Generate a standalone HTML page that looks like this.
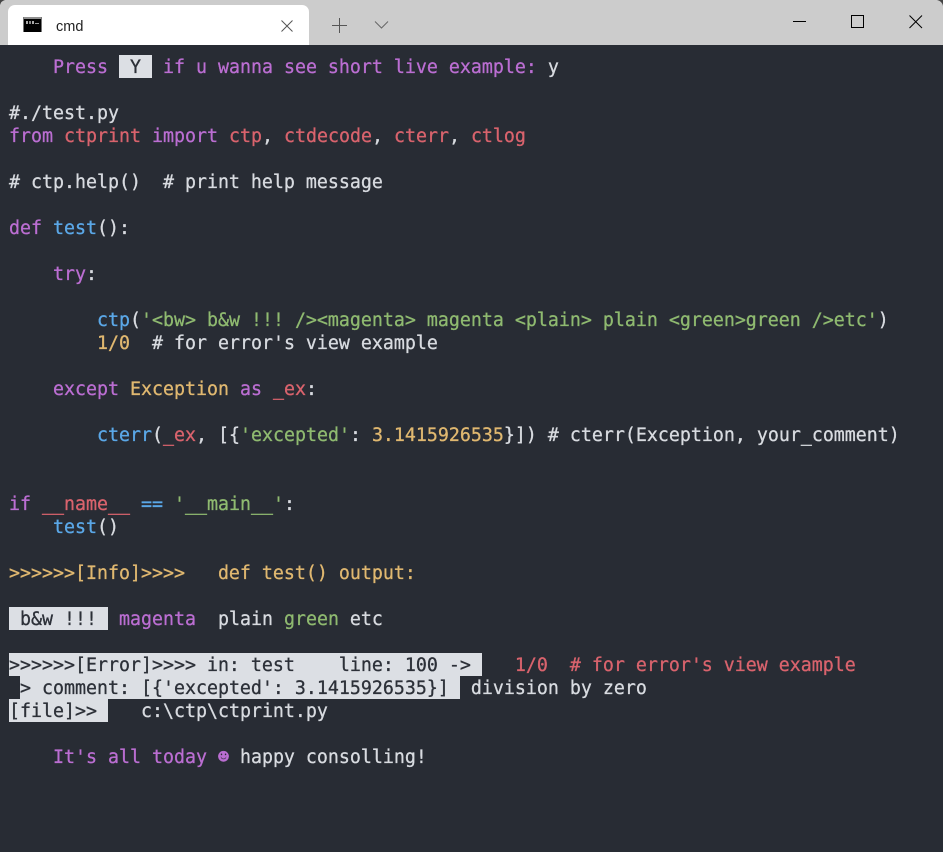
<!DOCTYPE html>
<html>
<head>
<meta charset="utf-8">
<style>
html,body{margin:0;padding:0;width:943px;height:852px;overflow:hidden;background:#282c34}
#bar{position:absolute;left:0;top:0;width:943px;height:45px;background:#cccccc}
#tab{position:absolute;left:8px;top:5px;width:301px;height:40px;background:#fff;border-radius:7px 7px 0 0}
#cmd{position:absolute;left:56px;top:18px;font:14.5px/18px "Liberation Sans",sans-serif;color:#222}
svg{position:absolute;left:0;top:0}
.l{position:absolute;left:9px;height:23px;margin:0;white-space:pre;font-family:"DejaVu Sans Mono",monospace;font-size:18.27px;line-height:23px;color:#d8dbe0;-webkit-text-stroke:.3px currentColor}
.m{color:#bb6ed2}.r{color:#d9636d}.g{color:#8fba70}.y{color:#e0b870}.b{color:#5ba8e8}
.k{color:#2c3038}
.hb{position:absolute;height:23px;background:#dcdfe4}
</style>
</head>
<body>
<div id="bar"></div>
<div id="tab"></div>
<div id="cmd">cmd</div>
<svg width="943" height="45" viewBox="0 0 943 45">
<path d="M0 0H5Q1 1 0 5Z" fill="#444"/>
<path d="M943 0H937Q942 1 943 6Z" fill="#444"/>
<rect x="23" y="17" width="19" height="15" fill="#000"/>
<rect x="23" y="17" width="19" height="2" fill="#8f8f8f"/>
<rect x="23" y="17" width="1" height="15" fill="#777"/>
<rect x="41" y="17" width="1" height="15" fill="#777"/>
<rect x="26" y="21" width="2" height="3" fill="#aaa"/>
<rect x="29" y="21" width="2" height="3" fill="#888"/>
<rect x="32" y="21" width="2" height="3" fill="#aaa"/>
<rect x="35" y="23" width="4" height="1" fill="#999"/>
<path d="M281.5 20.5L292.5 31.5M292.5 20.5L281.5 31.5" stroke="#555" stroke-width="1" fill="none"/>
<path d="M332 25.5H347M339.5 18V33" stroke="#555" stroke-width="1" fill="none"/>
<path d="M375 21.5L381.5 28L388 21.5" stroke="#666" stroke-width="1" fill="none"/>
<path d="M793 21.5H806" stroke="#000" stroke-width="1" fill="none"/>
<rect x="851.5" y="15.5" width="12" height="12" stroke="#000" stroke-width="1" fill="none"/>
<path d="M909.5 15.5L922 28M922 15.5L909.5 28" stroke="#000" stroke-width="1" fill="none"/>
</svg>

<div class="hb" style="left:119px;top:55px;width:33px"></div>
<div class="hb" style="left:9px;top:607px;width:99px"></div>
<div class="hb" style="left:9px;top:653px;width:473px"></div>
<div class="hb" style="left:20px;top:676px;width:440px"></div>
<div class="hb" style="left:9px;top:699px;width:99px"></div>

<pre class="l" style="top:56px">    <span class="m">Press </span><span class="k"> Y </span><span class="m"> if u wanna see short live example:</span> y</pre>
<pre class="l" style="top:102px">#./test.py</pre>
<pre class="l" style="top:125px"><span class="m">from</span> <span class="r">ctprint</span> <span class="m">import</span> <span class="r">ctp</span>, <span class="r">ctdecode</span>, <span class="r">cterr</span>, <span class="r">ctlog</span></pre>
<pre class="l" style="top:171px"># ctp.help()  # print help message</pre>
<pre class="l" style="top:217px"><span class="m">def</span> <span class="b">test</span>():</pre>
<pre class="l" style="top:263px">    <span class="m">try</span>:</pre>
<pre class="l" style="top:309px">        <span class="b">ctp</span>(<span class="g">'&lt;bw&gt; b&amp;w !!! /&gt;&lt;magenta&gt; magenta &lt;plain&gt; plain &lt;green&gt;green /&gt;etc'</span>)</pre>
<pre class="l" style="top:332px">        <span class="y">1/0</span>  # for error's view example</pre>
<pre class="l" style="top:378px">    <span class="m">except</span> <span class="y">Exception</span> <span class="m">as</span> <span class="r">_ex</span>:</pre>
<pre class="l" style="top:424px">        <span class="b">cterr</span>(<span class="r">_ex</span>, [{<span class="g">'excepted'</span>: <span class="y">3.1415926535</span>}]) # cterr(Exception, your_comment)</pre>
<pre class="l" style="top:493px"><span class="m">if</span> <span class="r">__name__</span> <span class="b">==</span> <span class="g">'__main__'</span>:</pre>
<pre class="l" style="top:516px">    <span class="b">test</span>()</pre>
<pre class="l y" style="top:562px">&gt;&gt;&gt;&gt;&gt;&gt;[Info]&gt;&gt;&gt;&gt;   def test() output:</pre>
<pre class="l" style="top:608px"><span class="k"> b&amp;w !!! </span> <span class="m">magenta</span>  plain <span class="g">green</span> etc</pre>
<pre class="l" style="top:654px"><span class="k">&gt;&gt;&gt;&gt;&gt;&gt;[Error]&gt;&gt;&gt;&gt; in: test    line: 100 -&gt; </span><span class="r">   1/0  # for error's view example</span></pre>
<pre class="l" style="top:677px"> <span class="k">&gt; comment: [{'excepted': 3.1415926535}] </span> division by zero</pre>
<pre class="l" style="top:700px"><span class="k">[file]&gt;&gt; </span>   c:\ctp\ctprint.py</pre>
<pre class="l" style="top:746px">    <span class="m">It's all today ☻</span> happy consolling!</pre>
</body>
</html>
